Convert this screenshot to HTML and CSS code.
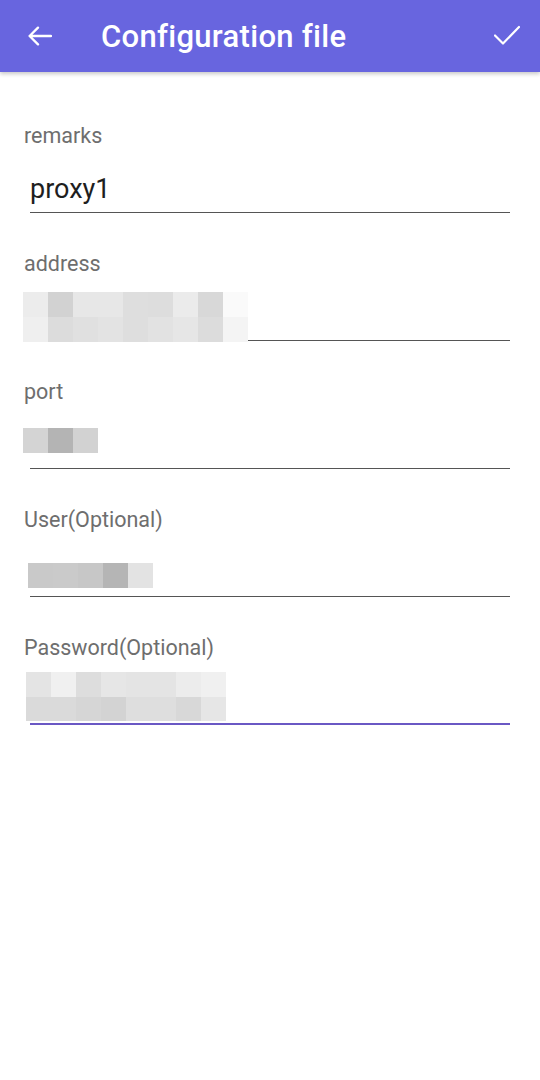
FILE: index.html
```html
<!DOCTYPE html>
<html>
<head>
<meta charset="utf-8">
<link rel="stylesheet" href="styles.css">
</head>
<body>
<header class="appbar">
  <svg class="icon back" viewBox="0 0 24 20" width="24" height="20"><path d="M23 10H1.6M10 1.6L1.6 10L10 18.4" fill="none" stroke="#fff" stroke-width="2.3" stroke-linecap="round" stroke-linejoin="round"/></svg>
  <h1 class="title">Configuration file</h1>
  <svg class="icon check" viewBox="0 0 26 20" width="26" height="20"><path d="M1 10.5l8 8L25 2" fill="none" stroke="#fff" stroke-width="2.2" stroke-linecap="round" stroke-linejoin="round"/></svg>
</header>

<main class="form">
  <section class="field">
    <div class="label">remarks</div>
    <div class="input">
      <span class="value">proxy1</span>
    </div>
  </section>

  <section class="field">
    <div class="label">address</div>
    <div class="input">
      <div class="mosaic m-address">
        <i class="s-ec"></i><i class="s-d2"></i><i class="s-e7"></i><i class="s-e7"></i><i class="s-de"></i><i class="s-dd"></i><i class="s-eb"></i><i class="s-d8"></i><i class="s-fa"></i>
        <i class="s-ef"></i><i class="s-dc"></i><i class="s-e0"></i><i class="s-e3"></i><i class="s-de"></i><i class="s-e2"></i><i class="s-e6"></i><i class="s-dc"></i><i class="s-f4"></i>
      </div>
    </div>
  </section>

  <section class="field">
    <div class="label">port</div>
    <div class="input">
      <div class="mosaic m-port">
        <i class="s-d4"></i><i class="s-b4"></i><i class="s-d2"></i>
      </div>
    </div>
  </section>

  <section class="field">
    <div class="label">User(Optional)</div>
    <div class="input">
      <div class="mosaic m-user">
        <i class="s-c9"></i><i class="s-ca"></i><i class="s-c7"></i><i class="s-b5"></i><i class="s-e3"></i>
      </div>
    </div>
  </section>

  <section class="field">
    <div class="label">Password(Optional)</div>
    <div class="input focused">
      <div class="mosaic m-pass">
        <i class="s-e4"></i><i class="s-f0"></i><i class="s-dd"></i><i class="s-e6"></i><i class="s-e4"></i><i class="s-e4"></i><i class="s-ec"></i><i class="s-f0"></i>
        <i class="s-da"></i><i class="s-da"></i><i class="s-d6"></i><i class="s-d3"></i><i class="s-de"></i><i class="s-de"></i><i class="s-d8"></i><i class="s-e6"></i>
      </div>
    </div>
  </section>
</main>
</body>
</html>
```

FILE: styles.css
```css
* { box-sizing: border-box; }
html, body { margin: 0; padding: 0; background: #fff; }
body {
  width: 540px;
  height: 1080px;
  font-family: Roboto, "Noto Sans", "Liberation Sans", sans-serif;
  overflow: hidden;
}

.appbar {
  height: 72px;
  background: #6865df;
  display: flex;
  align-items: center;
  padding: 0 20px 0 28px;
  box-shadow: 0 2px 4px rgba(0, 0, 0, 0.22);
  color: #fff;
}
.icon { display: block; flex: none; }
.back { width: 24px; height: 20px; }
.title {
  margin: 0 0 0 49px;
  font-size: 31px;
  font-weight: 500;
  flex: 1;
  letter-spacing: 0.3px;
  line-height: 1;
}
.check { width: 26px; height: 20px; margin-top: -2px; }

.form {
  padding: 52px 30px 0 24px;
}
.field { margin-bottom: 39px; }
.label {
  height: 24px;
  line-height: 24px;
  font-size: 21.5px;
  color: #6e6e6e;
}
.input {
  margin-left: 6px;
  height: 65px;
  border-bottom: 1px solid #555;
  padding-top: 25px;
}
.input.focused { border-bottom: 2px solid #6a58c4; }
.value {
  display: block;
  font-size: 27px;
  line-height: 32px;
  color: #1e1e1e;
}

.mosaic { display: grid; grid-auto-rows: 25px; }
.mosaic i { display: block; }

.m-address { grid-template-columns: repeat(9, 25px); margin: -9px 0 0 -7px; }
.m-port { grid-template-columns: repeat(3, 25px); margin: -1px 0 0 -7px; }
.m-user { grid-template-columns: repeat(5, 25px); margin: 6px 0 0 -2px; }
.m-pass { grid-template-columns: repeat(8, 25px); grid-template-rows: 25px 24px; margin: -13px 0 0 -4px; }

.s-b4 { background: #b4b4b4; }
.s-b5 { background: #b5b5b5; }
.s-c7 { background: #c7c7c7; }
.s-c9 { background: #c9c9c9; }
.s-ca { background: #cacaca; }
.s-d2 { background: #d2d2d2; }
.s-d3 { background: #d3d3d3; }
.s-d4 { background: #d4d4d4; }
.s-d6 { background: #d6d6d6; }
.s-d8 { background: #d8d8d8; }
.s-da { background: #dadada; }
.s-dc { background: #dcdcdc; }
.s-dd { background: #dddddd; }
.s-de { background: #dedede; }
.s-e0 { background: #e0e0e0; }
.s-e2 { background: #e2e2e2; }
.s-e3 { background: #e3e3e3; }
.s-e4 { background: #e4e4e4; }
.s-e6 { background: #e6e6e6; }
.s-e7 { background: #e7e7e7; }
.s-eb { background: #ebebeb; }
.s-ec { background: #ececec; }
.s-ef { background: #efefef; }
.s-f0 { background: #f0f0f0; }
.s-f4 { background: #f4f4f4; }
.s-fa { background: #fafafa; }
```
